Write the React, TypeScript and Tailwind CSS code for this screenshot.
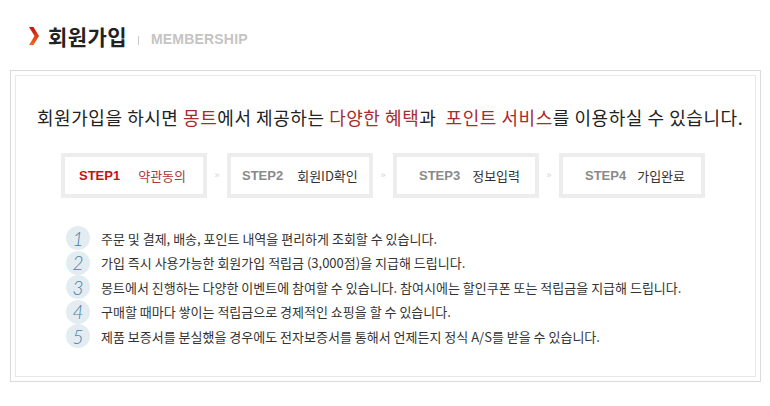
import React from 'react';

const steps = [
  { no: 'STEP1', label: '약관동의', active: true, pad: 'pl-[14px]', gap: 'gap-[18px]' },
  { no: 'STEP2', label: '회원ID확인', active: false, pad: 'pl-[11px]', gap: 'gap-[14px]' },
  { no: 'STEP3', label: '정보입력', active: false, pad: 'pl-[22px]', gap: 'gap-[12px]' },
  { no: 'STEP4', label: '가입완료', active: false, pad: 'pl-[22px]', gap: 'gap-[11px]' },
];

const benefits = [
  '주문 및 결제, 배송, 포인트 내역을 편리하게 조회할 수 있습니다.',
  '가입 즉시 사용가능한 회원가입 적립금 (3,000점)을 지급해 드립니다.',
  '몽트에서 진행하는 다양한 이벤트에 참여할 수 있습니다. 참여시에는 할인쿠폰 또는 적립금을 지급해 드립니다.',
  '구매할 때마다 쌓이는 적립금으로 경제적인 쇼핑을 할 수 있습니다.',
  '제품 보증서를 분실했을 경우에도 전자보증서를 통해서 언제든지 정식 A/S를 받을 수 있습니다.',
];

const kr = "font-['Noto_Sans_CJK_KR',sans-serif]";

const App: React.FC = () => {
  return (
    <div className={`w-[770px] h-[406px] bg-white text-[#333] ${kr}`}>
      {/* Title */}
      <div className="h-[70px] flex items-center pl-[29px] pt-[2px]">
        <svg width="10" height="18" viewBox="0 0 10 18" className="mr-[9px]">
          <defs>
            <linearGradient id="chev" x1="0" y1="0" x2="0" y2="1">
              <stop offset="0" stopColor="#c8120e" />
              <stop offset="1" stopColor="#f26a1e" />
            </linearGradient>
          </defs>
          <polygon points="0,0 4.5,0 10,9 4.5,18 0,18 5.5,9" fill="url(#chev)" />
        </svg>
        <span className="text-[21px] font-bold leading-none text-[#222] tracking-[0.4px]">회원가입</span>
        <span className="ml-[11px] mt-[8px] w-px h-[9px] bg-[#c8c8c8]" />
        <span className="ml-[12px] mt-[5px] font-['Liberation_Sans',sans-serif] font-bold text-[14px] leading-none text-[#c4c4c4] tracking-[0.2px]">
          MEMBERSHIP
        </span>
      </div>

      {/* Box */}
      <div className="ml-[10px] w-[751px] h-[312px] border border-[#dadada] p-[4px]">
        <div className="h-full border border-[#e8e8e8]">
          <p className="pt-[28px] pl-[21px] text-[18px] leading-[26px] text-[#222] tracking-[0.55px] whitespace-nowrap">
            회원가입을 하시면 <span className="text-[#a92c2c]">몽트</span>에서 제공하는{' '}
            <span className="text-[#a92c2c]">다양한 혜택</span>과&nbsp;{' '}
            <span className="text-[#a92c2c]">포인트 서비스</span>를 이용하실 수 있습니다.
          </p>

          {/* Steps */}
          <div className="mt-[23px] ml-[45px] flex items-center">
            {steps.map((s, i) => (
              <React.Fragment key={s.no}>
                {i > 0 && (
                  <span className="w-[20px] text-center text-[9px] text-[#cfcfcf] font-['Liberation_Sans',sans-serif]">»</span>
                )}
                <div className={`w-[146px] h-[45px] border-[4px] border-[#ededed] flex items-center ${s.pad} ${s.gap}`}>
                  <span
                    className={`font-['Liberation_Sans',sans-serif] font-bold text-[13px] ${
                      s.active ? 'text-[#cc1010]' : 'text-[#8a8a8a]'
                    }`}
                  >
                    {s.no}
                  </span>
                  <span className={`text-[13px] ${s.active ? 'text-[#b3363c]' : 'text-[#333]'}`}>{s.label}</span>
                </div>
              </React.Fragment>
            ))}
          </div>

          {/* Benefits */}
          <ul className="mt-[28px] ml-[50px]">
            {benefits.map((b, i) => (
              <li key={i} className="h-[24.5px] flex items-center">
                <span className="w-[24px] h-[24px] rounded-full bg-[#e3ecf1] flex items-center justify-center font-['Lato',sans-serif] italic font-light text-[19px] leading-none text-[#4b7fa8]">
                  {i + 1}
                </span>
                <span className="ml-[11px] text-[13px] text-[#333]">{b}</span>
              </li>
            ))}
          </ul>
        </div>
      </div>
    </div>
  );
};

export default App;
